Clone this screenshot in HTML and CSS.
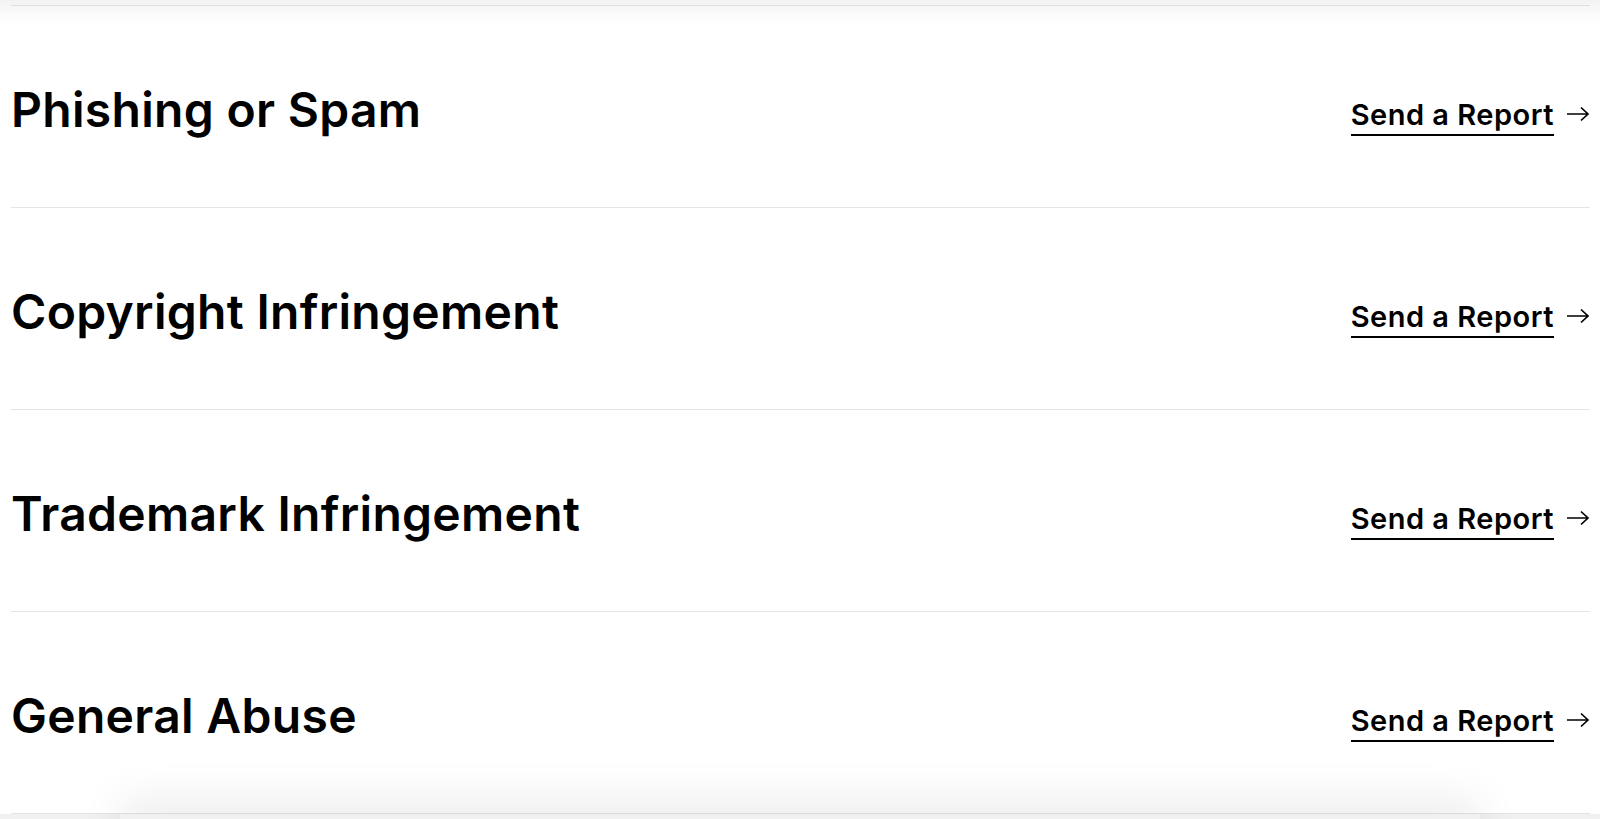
FILE: index.html
```html
<!DOCTYPE html>
<html lang="en">
<head>
<meta charset="utf-8">
<title>Report Abuse</title>
<link rel="stylesheet" href="styles.css">
</head>
<body>
<main class="page">
  <ul class="reports">
    <li class="report">
      <h2 class="report-title">Phishing or Spam</h2>
      <a class="report-link" href="#"><span class="report-link-text">Send a Report</span><svg class="arrow" width="24" height="16" viewBox="0 0 24 16" aria-hidden="true"><path d="M1 8H22M15 1.5L22 8L15 14.5" fill="none" stroke="#000" stroke-width="1.7"/></svg></a>
    </li>
    <li class="report">
      <h2 class="report-title">Copyright Infringement</h2>
      <a class="report-link" href="#"><span class="report-link-text">Send a Report</span><svg class="arrow" width="24" height="16" viewBox="0 0 24 16" aria-hidden="true"><path d="M1 8H22M15 1.5L22 8L15 14.5" fill="none" stroke="#000" stroke-width="1.7"/></svg></a>
    </li>
    <li class="report">
      <h2 class="report-title">Trademark Infringement</h2>
      <a class="report-link" href="#"><span class="report-link-text">Send a Report</span><svg class="arrow" width="24" height="16" viewBox="0 0 24 16" aria-hidden="true"><path d="M1 8H22M15 1.5L22 8L15 14.5" fill="none" stroke="#000" stroke-width="1.7"/></svg></a>
    </li>
    <li class="report">
      <h2 class="report-title">General Abuse</h2>
      <a class="report-link" href="#"><span class="report-link-text">Send a Report</span><svg class="arrow" width="24" height="16" viewBox="0 0 24 16" aria-hidden="true"><path d="M1 8H22M15 1.5L22 8L15 14.5" fill="none" stroke="#000" stroke-width="1.7"/></svg></a>
    </li>
  </ul>
  <section class="next-section">
    <div class="next-card"></div>
  </section>
</main>
</body>
</html>
```
FILE: styles.css
```css
html, body {
  margin: 0;
  padding: 0;
}
body {
  background-color: #fff;
  background-image: linear-gradient(to bottom, #f2f2f2 0px, #f5f5f5 5px, #fbfbfb 14px, #ffffff 28px);
  background-repeat: no-repeat;
  background-size: 100% 30px;
  font-family: Inter, "Open Sans", "Liberation Sans", sans-serif;
  color: #000;
  overflow: hidden;
}
.page {
  padding: 5px 10px 0 11px;
}
.reports {
  list-style: none;
  margin: 0;
  padding: 0;
  border-top: 1px solid #dcdfe0;
}
.report {
  display: flex;
  align-items: center;
  justify-content: space-between;
  height: 202px;
  border-bottom: 1px solid #e3e5e6;
  box-sizing: border-box;
}
.report-title {
  margin: 0;
  padding-top: 6px;
  font-size: 48px;
  font-weight: 600;
  letter-spacing: 0.3px;
  line-height: 1.2;
}
.report-link {
  display: flex;
  align-items: center;
  gap: 12px;
  color: #000;
  text-decoration: none;
  padding-top: 23px;
}
.report-link-text {
  font-size: 29px;
  font-weight: 600;
  letter-spacing: 0.5px;
  line-height: 1;
  padding-bottom: 5px;
  border-bottom: 2px solid #000;
}
.arrow {
  display: block;
  margin-bottom: 8px;
}
.next-section {
  background: #f0f0f0;
  height: 60px;
  margin: 0 -10px 0 -11px;
}
.next-card {
  margin: 0 120px;
  height: 60px;
  background: #f0f0f0;
  box-shadow: 0 -16px 44px rgba(0, 0, 0, 0.07);
}
```
